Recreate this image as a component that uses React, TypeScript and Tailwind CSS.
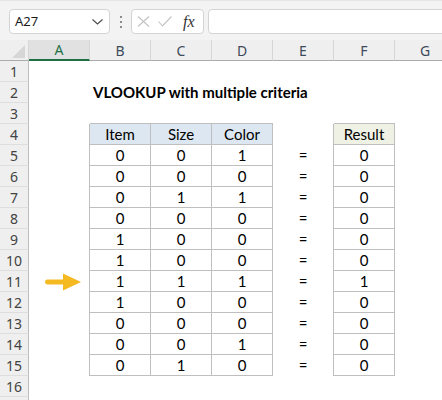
import React from 'react';

const data: number[][] = [
  [0, 0, 1, 0],
  [0, 0, 0, 0],
  [0, 1, 1, 0],
  [0, 0, 0, 0],
  [1, 0, 0, 0],
  [1, 0, 0, 0],
  [1, 1, 1, 1],
  [1, 0, 0, 0],
  [0, 0, 0, 0],
  [0, 0, 1, 0],
  [0, 1, 0, 0],
];

const COLS = ['A', 'B', 'C', 'D', 'E', 'F', 'G'];

function Arrow() {
  return (
    <svg width="36" height="18" viewBox="0 0 36 18" className="ml-[16px]">
      <path d="M2.5 6.5 H19 V11.5 H2.5 A2.5 2.5 0 0 1 2.5 6.5 Z" fill="#f5b922" />
      <path d="M18 0.5 L36 9 L18 17.5 Z" fill="#f5b922" />
    </svg>
  );
}

function cellClass(r: number, c: number): string {
  const inTable = r >= 4 && r <= 15 && (c === 1 || c === 2 || c === 3 || c === 5);
  const leftOfTable = r >= 4 && r <= 15 && (c === 0 || c === 4);
  const aboveTable = r === 3 && (c === 1 || c === 2 || c === 3 || c === 5);
  let cls = 'w-[61px] h-[21px] shrink-0 flex items-center justify-center text-[15px] text-black';
  if (inTable) {
    cls += ' border-r border-b border-[#bfbfbf]';
    if (r === 4) cls += c === 5 ? ' bg-[#eef1e3]' : ' bg-[#dde7f1]';
  } else if (leftOfTable) {
    cls += ' border-r border-[#bfbfbf]';
  } else if (aboveTable) {
    cls += ' border-b border-[#bfbfbf]';
  }
  return cls;
}

function cellContent(r: number, c: number): React.ReactNode {
  if (r === 4) {
    if (c === 1) return 'Item';
    if (c === 2) return 'Size';
    if (c === 3) return 'Color';
    if (c === 5) return 'Result';
  }
  if (r >= 5 && r <= 15) {
    const d = data[r - 5];
    if (c === 1) return d[0];
    if (c === 2) return d[1];
    if (c === 3) return d[2];
    if (c === 4) return '=';
    if (c === 5) return d[3];
  }
  return null;
}

export default function App() {
  const rows = Array.from({ length: 17 }, (_, i) => i + 1);
  return (
    <div className="w-[442px] h-[400px] overflow-hidden bg-white [font-family:Lato,'Liberation_Sans',sans-serif]">
      {/* Toolbar */}
      <div className="flex items-start h-[40px] pt-[8px] bg-[#f3f3f3] border-t border-[#e6e6e6]">
        <div className="ml-[9px] w-[101px] h-[25px] shrink-0 bg-white border border-[#d4d4d4] rounded-[4px] flex items-center justify-between pl-[5px] pr-[5px] [font-family:'Noto_Sans',sans-serif] text-[13px] text-[#1a1a1a]">
          <span>A27</span>
          <svg width="11" height="6" viewBox="0 0 11 6" className="mr-[1px]">
            <path d="M0.5 0.5 L5.5 5 L10.5 0.5" stroke="#4a4a4a" strokeWidth="1.1" fill="none" />
          </svg>
        </div>
        <div className="w-[21px] h-[25px] shrink-0 flex flex-col items-center justify-center gap-[3px]">
          <div className="w-[2px] h-[2px] bg-[#8c8c8c]" />
          <div className="w-[2px] h-[2px] bg-[#8c8c8c]" />
          <div className="w-[2px] h-[2px] bg-[#8c8c8c]" />
        </div>
        <div className="w-[73px] h-[25px] shrink-0 bg-white border border-[#d4d4d4] rounded-[4px] flex items-center pl-[5px]">
          <svg width="13" height="11" viewBox="0 0 13 11">
            <path d="M1 0.5 L12 10.5 M12 0.5 L1 10.5" stroke="#c2c2c2" strokeWidth="1.1" fill="none" />
          </svg>
          <svg width="14" height="11" viewBox="0 0 14 11" className="ml-[8px]">
            <path d="M0.5 5.5 L4.5 10 L13.5 0.5" stroke="#c2c2c2" strokeWidth="1.1" fill="none" />
          </svg>
          <span className="ml-[11px] [font-family:'Liberation_Serif',serif] italic text-[16px] text-[#333] leading-none">fx</span>
        </div>
        <div className="ml-[4px] w-[260px] h-[25px] shrink-0 bg-white border border-[#d4d4d4] rounded-[4px]" />
      </div>

      {/* Column headers */}
      <div className="flex h-[21px] [font-family:'Noto_Sans',sans-serif]">
        <div className="w-[29px] h-[21px] shrink-0 bg-[#efefef] border-r border-b border-r-[#d6d6d6] border-b-[#ababab] flex items-end justify-end pr-[3px] pb-[2px]">
          <svg width="13" height="13" viewBox="0 0 13 13">
            <path d="M13 0 L13 13 L0 13 Z" fill="#d6d6d6" />
          </svg>
        </div>
        {COLS.map((c, i) =>
          i === 0 ? (
            <div key={c} className="w-[61px] h-[21px] shrink-0 bg-[#e1e1e1] border-r border-b-2 border-r-[#d6d6d6] border-b-[#1e7145] flex items-center justify-center text-[14px] text-[#1e7145]">
              {c}
            </div>
          ) : (
            <div key={c} className="w-[61px] h-[21px] shrink-0 bg-[#efefef] border-r border-b border-r-[#d6d6d6] border-b-[#ababab] flex items-center justify-center text-[14px] text-[#3d4a5a]">
              {c}
            </div>
          )
        )}
      </div>

      {/* Rows */}
      {rows.map((r) => (
        <div key={r} className="flex h-[21px]">
          <div className="w-[29px] h-[21px] shrink-0 bg-[#efefef] border-r border-b border-r-[#bdbdbd] border-b-[#dedede] flex items-center justify-center text-[14px] text-[#424242] [font-family:'Noto_Sans',sans-serif]">
            {r <= 16 ? r : null}
          </div>
          {COLS.map((_, c) => {
            if (r === 2 && c === 1) {
              return (
                <div key={c} className="relative z-10 w-[61px] h-[21px] shrink-0 flex items-center pl-[3px] overflow-visible">
                  <span className="whitespace-nowrap font-bold text-[15px] text-black">VLOOKUP with multiple criteria</span>
                </div>
              );
            }
            if (r === 11 && c === 0) {
              return (
                <div key={c} className="w-[61px] h-[21px] shrink-0 flex items-center border-r border-[#bfbfbf]">
                  <Arrow />
                </div>
              );
            }
            return (
              <div key={c} className={cellClass(r, c)}>
                {cellContent(r, c)}
              </div>
            );
          })}
        </div>
      ))}
    </div>
  );
}
